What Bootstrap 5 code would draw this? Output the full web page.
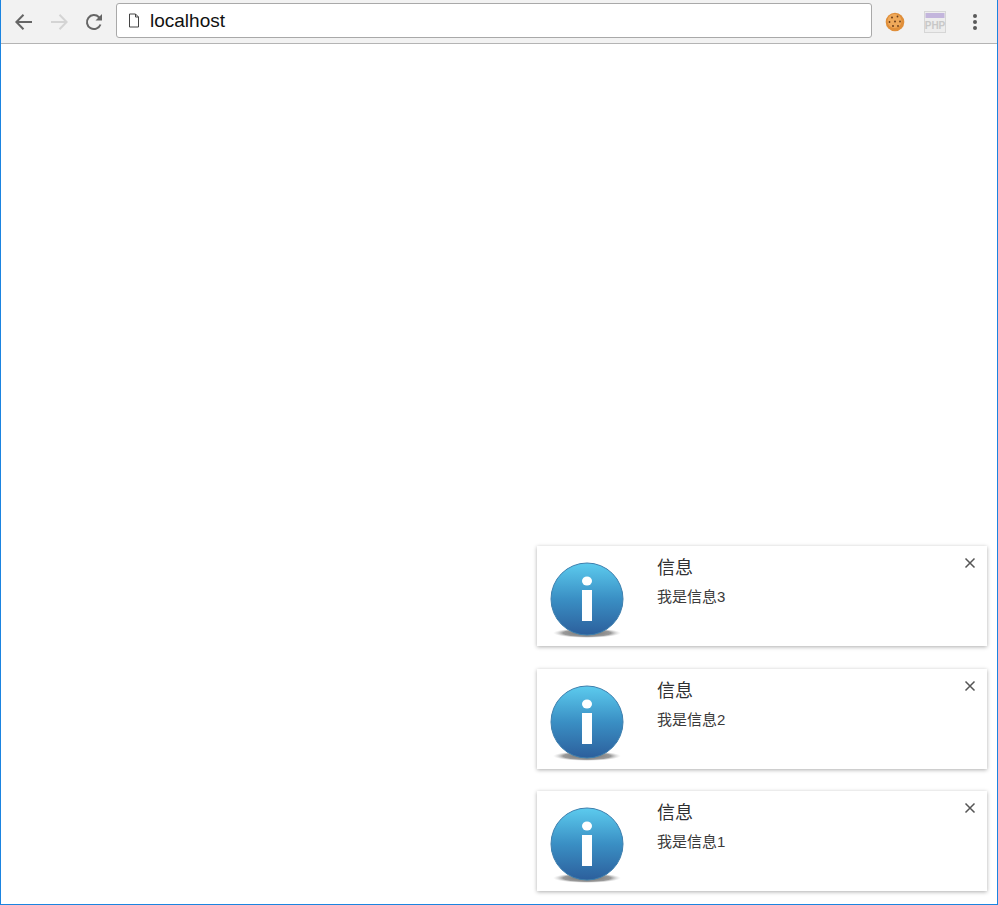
<!DOCTYPE html>
<html lang="zh">
<head>
<meta charset="utf-8">
<title>localhost</title>
<link href="https://cdn.jsdelivr.net/npm/bootstrap@5.3.0/dist/css/bootstrap.min.css" rel="stylesheet">
<style>
html,body{height:100%;margin:0;background:#fff;}
body{font-family:"Liberation Sans","Noto Sans CJK SC",sans-serif;color:#333;}
.win-frame{height:905px;border:1px solid #1b84e0;border-top:0;}
.tool-strip{height:44px;background:#f2f2f2;border-bottom:1px solid #b4b4b4;padding-left:10px;padding-right:2px;}
.tool-btn{width:26px;height:26px;flex:none;}
.tool-btn + .tool-btn{margin-left:9px;}
.addr-box{flex:none;width:756px;height:35px;margin:0 3px 2px 9px;background:#fff;border:1px solid #a9a9a9;border-radius:3px;padding-left:11px;font-size:19px;color:#111;}
.addr-text{margin-left:10px;line-height:1;}
.ext-slot{width:40px;flex:none;}
.note-stack{padding:0 10px 13px 0;}
.note-item{width:450px;height:100px;background:#fff;box-shadow:0 1px 4px rgba(0,0,0,.32);padding:16px 0 0 13px;}
.note-item + .note-item{margin-top:22.5px;}
.note-pic{width:74px;height:76px;flex:none;}
.note-copy{margin-left:33px;margin-top:-6px;}
.note-title{font-size:18px;line-height:24px;color:#303133;}
.note-body{font-size:15px;line-height:21px;margin-top:6px;color:#3a3a3a;}
.note-x{top:10px;right:10px;width:14px;height:14px;}
</style>
</head>
<body>
<div class="win-frame d-flex flex-column">
  <div class="tool-strip d-flex align-items-center">
    <svg class="tool-btn" viewBox="0 0 26 26"><path d="M21 13H6M12.500 5.800 5.400 13l7.100 7.200" fill="none" stroke="#666" stroke-width="2"/></svg>
    <svg class="tool-btn" viewBox="0 0 26 26"><path d="M5 13h15M13.500 5.800 20.600 13l-7.100 7.200" fill="none" stroke="#d4d4d4" stroke-width="2"/></svg>
    <svg class="tool-btn" viewBox="0 0 26 26"><path d="M19.500 15.500A7 7 0 1 1 18 8.200L20 10.200" fill="none" stroke="#666" stroke-width="2"/><path d="M21 5v6.500h-6.500z" fill="#666"/></svg>
    <div class="addr-box d-flex align-items-center">
      <svg width="12" height="15" viewBox="0 0 12 15"><path d="M1.500 1h6l3 3v10h-9zM7.500 1v3h3" fill="#fff" stroke="#444"/></svg>
      <span class="addr-text">localhost</span>
    </div>
    <div class="ext-slot d-flex justify-content-center">
      <svg width="20" height="20" viewBox="0 0 20 20"><circle cx="10" cy="10" r="9.300" fill="#e08f3a"/><circle cx="9.500" cy="9" r="7" fill="#efa95a"/><g fill="#6b3d18"><circle cx="7" cy="5.500" r="1"/><circle cx="12.500" cy="4.500" r=".9"/><circle cx="4.500" cy="10" r=".9"/><circle cx="10" cy="9.500" r="1"/><circle cx="15" cy="9.500" r=".9"/><circle cx="8" cy="14" r="1"/><circle cx="13" cy="14" r=".9"/></g></svg>
    </div>
    <div class="ext-slot d-flex justify-content-center">
      <svg width="22" height="22" viewBox="0 0 22 22"><rect x=".5" y=".5" width="21" height="21" fill="#ededed" stroke="#d6d6d6"/><rect x="1.500" y="2" width="19" height="5" fill="#c3b5dc"/><text x="11" y="17.500" text-anchor="middle" font-family="Liberation Sans" font-size="10" font-weight="700" fill="#c8c8c8">PHP</text></svg>
    </div>
    <div class="ext-slot d-flex justify-content-center">
      <svg width="6" height="18" viewBox="0 0 6 18"><g fill="#5a5a5a"><circle cx="3" cy="3" r="2"/><circle cx="3" cy="9" r="2"/><circle cx="3" cy="15" r="2"/></g></svg>
    </div>
  </div>
  <div class="note-stack flex-grow-1 d-flex flex-column align-items-end justify-content-end">
    <div class="note-item d-flex position-relative">
      <svg class="note-pic" viewBox="0 0 74 76"><use href="#info-art"/></svg>
      <div class="note-copy"><div class="note-title">信息</div><div class="note-body">我是信息3</div></div>
      <svg class="note-x position-absolute" viewBox="0 0 14 14"><path d="M2.500 2.500l9 9M11.500 2.500l-9 9" stroke="#555" stroke-width="1.500"/></svg>
    </div>
    <div class="note-item d-flex position-relative">
      <svg class="note-pic" viewBox="0 0 74 76"><use href="#info-art"/></svg>
      <div class="note-copy"><div class="note-title">信息</div><div class="note-body">我是信息2</div></div>
      <svg class="note-x position-absolute" viewBox="0 0 14 14"><path d="M2.500 2.500l9 9M11.500 2.500l-9 9" stroke="#555" stroke-width="1.500"/></svg>
    </div>
    <div class="note-item d-flex position-relative">
      <svg class="note-pic" viewBox="0 0 74 76"><use href="#info-art"/></svg>
      <div class="note-copy"><div class="note-title">信息</div><div class="note-body">我是信息1</div></div>
      <svg class="note-x position-absolute" viewBox="0 0 14 14"><path d="M2.500 2.500l9 9M11.500 2.500l-9 9" stroke="#555" stroke-width="1.500"/></svg>
    </div>
  </div>
</div>
<svg width="0" height="0" class="position-absolute">
  <defs>
    <linearGradient id="ballFill" x1="0" y1="0" x2="0" y2="1"><stop offset="0" stop-color="#5ccbee"/><stop offset=".5" stop-color="#3a8fc4"/><stop offset="1" stop-color="#2c5f9c"/></linearGradient>
    <radialGradient id="ballShade"><stop offset="0" stop-color="#6f6f6f"/><stop offset=".7" stop-color="#9a9a9a"/><stop offset="1" stop-color="#d8d8d8" stop-opacity="0"/></radialGradient>
    <g id="info-art">
      <ellipse cx="37" cy="71" rx="34" ry="5" fill="url(#ballShade)"/>
      <circle cx="37" cy="37" r="36" fill="url(#ballFill)" stroke="#3d7fae"/>
      <ellipse cx="37" cy="19" rx="5" ry="4.500" fill="#fff"/>
      <rect x="32" y="28" width="10" height="31" fill="#fff"/>
    </g>
  </defs>
</svg>
<script src="https://cdn.jsdelivr.net/npm/bootstrap@5.3.0/dist/js/bootstrap.bundle.min.js"></script>
</body>
</html>
